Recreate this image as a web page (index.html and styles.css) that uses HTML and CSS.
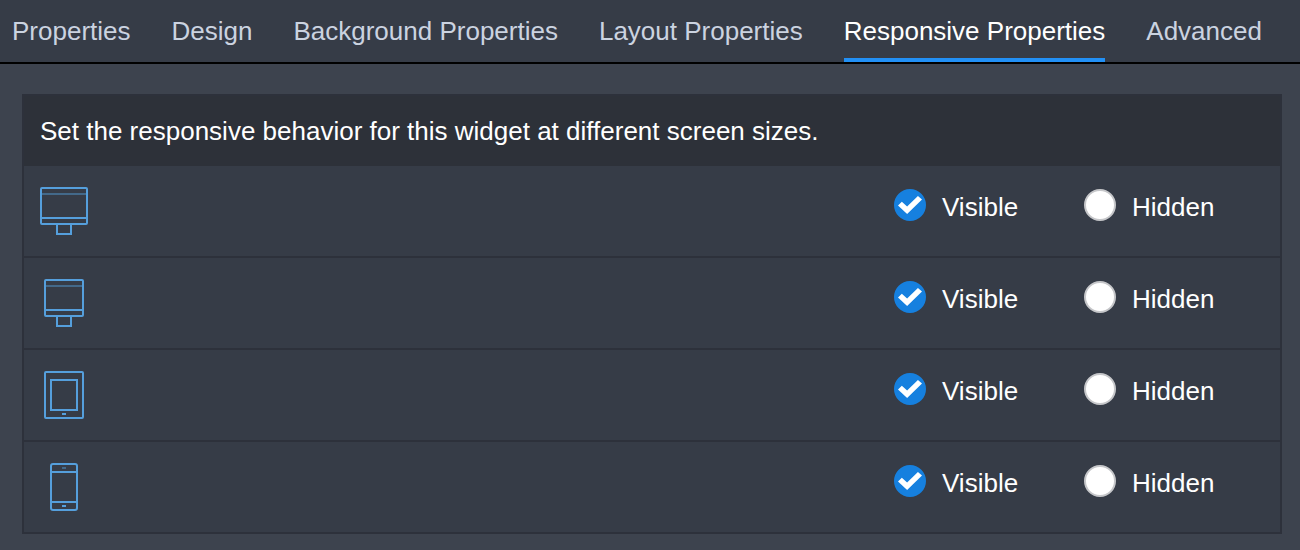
FILE: index.html
```html
<!DOCTYPE html>
<html lang="en">
<head>
<meta charset="utf-8">
<title>Responsive Properties</title>
<link rel="stylesheet" href="styles.css">
</head>
<body>
<nav class="tabs" aria-label="Widget settings">
  <a class="tab" href="#properties">Properties</a>
  <a class="tab" href="#design">Design</a>
  <a class="tab" href="#background">Background Properties</a>
  <a class="tab" href="#layout">Layout Properties</a>
  <a class="tab tab-active" href="#responsive" aria-current="page">Responsive Properties</a>
  <a class="tab" href="#advanced">Advanced</a>
</nav>
<main class="panel" id="responsive">
  <h1 class="panel-title">Set the responsive behavior for this widget at different screen sizes.</h1>
  <div class="row" role="radiogroup" aria-label="Desktop">
    <svg class="device" viewBox="0 0 48 48" aria-hidden="true">
      <rect x="1" y="1" width="46" height="36" rx="1"/>
      <path class="faint" d="M2 7H46"/>
      <path d="M2 31H46M17 37V47H31V37"/>
    </svg>
    <div class="options">
      <label class="option"><input class="radio" type="radio" name="desktop" checked>Visible</label>
      <label class="option"><input class="radio" type="radio" name="desktop">Hidden</label>
    </div>
  </div>
  <div class="row" role="radiogroup" aria-label="Small desktop">
    <svg class="device" viewBox="0 0 48 48" aria-hidden="true">
      <rect x="5" y="1" width="38" height="36" rx="1"/>
      <path class="faint" d="M6 7H42"/>
      <path d="M6 31H42M17 37V47H31V37"/>
    </svg>
    <div class="options">
      <label class="option"><input class="radio" type="radio" name="small-desktop" checked>Visible</label>
      <label class="option"><input class="radio" type="radio" name="small-desktop">Hidden</label>
    </div>
  </div>
  <div class="row" role="radiogroup" aria-label="Tablet">
    <svg class="device" viewBox="0 0 48 48" aria-hidden="true">
      <rect x="5" y="1" width="38" height="46" rx="1"/>
      <rect x="11" y="9" width="26" height="30"/>
      <path d="M22 43H26"/>
    </svg>
    <div class="options">
      <label class="option"><input class="radio" type="radio" name="tablet" checked>Visible</label>
      <label class="option"><input class="radio" type="radio" name="tablet">Hidden</label>
    </div>
  </div>
  <div class="row" role="radiogroup" aria-label="Phone">
    <svg class="device" viewBox="0 0 48 48" aria-hidden="true">
      <rect x="11" y="1" width="26" height="46" rx="2"/>
      <path d="M12 9H36M12 39H36M22 43H26"/>
      <path class="faint" d="M22 5H26"/>
    </svg>
    <div class="options">
      <label class="option"><input class="radio" type="radio" name="phone" checked>Visible</label>
      <label class="option"><input class="radio" type="radio" name="phone">Hidden</label>
    </div>
  </div>
</main>
</body>
</html>
```
FILE: styles.css
```css
* {
  box-sizing: border-box;
}

body {
  margin: 0;
  background: #3d434e;
  color: #fff;
  font: 26px/36px "Helvetica Neue", "Liberation Sans", Arial, sans-serif;
}

.tabs {
  display: flex;
  gap: 41px;
  padding: 0 12px;
  background: #363c47;
  border-bottom: 2px solid #000;
}

.tab {
  padding: 13px 0 9px;
  border-bottom: 4px solid transparent;
  color: #cbd3e0;
  text-decoration: none;
  white-space: nowrap;
}

.tab-active {
  border-color: #2290f5;
  color: #fff;
}

.panel {
  margin: 30px 18px 16px 22px;
  border: 2px solid #2d313b;
  background: #363c47;
}

.panel-title {
  margin: 0;
  padding: 17px 16px;
  background: #2d3139;
  font-size: 26px;
  font-weight: 400;
}

.row {
  display: flex;
  justify-content: space-between;
  padding: 21px 16px;
}

.row + .row {
  border-top: 2px solid #2d313b;
}

.device {
  width: 48px;
  height: 48px;
  fill: none;
  stroke: #559fdc;
  stroke-width: 2;
}

.faint {
  opacity: 0.45;
}

.options {
  display: grid;
  grid-template-columns: 190px 180px;
  align-items: start;
  padding-top: 2px;
}

.option {
  display: flex;
  align-items: flex-start;
  gap: 16px;
}

.radio {
  appearance: none;
  flex: none;
  width: 32px;
  height: 32px;
  margin: 0;
  border: 2px solid #c6c7ca;
  border-radius: 50%;
  background: #fff;
}

.radio:checked {
  display: grid;
  place-items: center;
  border-color: #1680df;
  background: #1680df;
}

.radio:checked::before {
  content: "";
  width: 24px;
  height: 18px;
  background: #fff;
  clip-path: polygon(0 53%, 16% 32%, 38% 58%, 83% 0, 100% 20%, 38% 100%);
}
```
